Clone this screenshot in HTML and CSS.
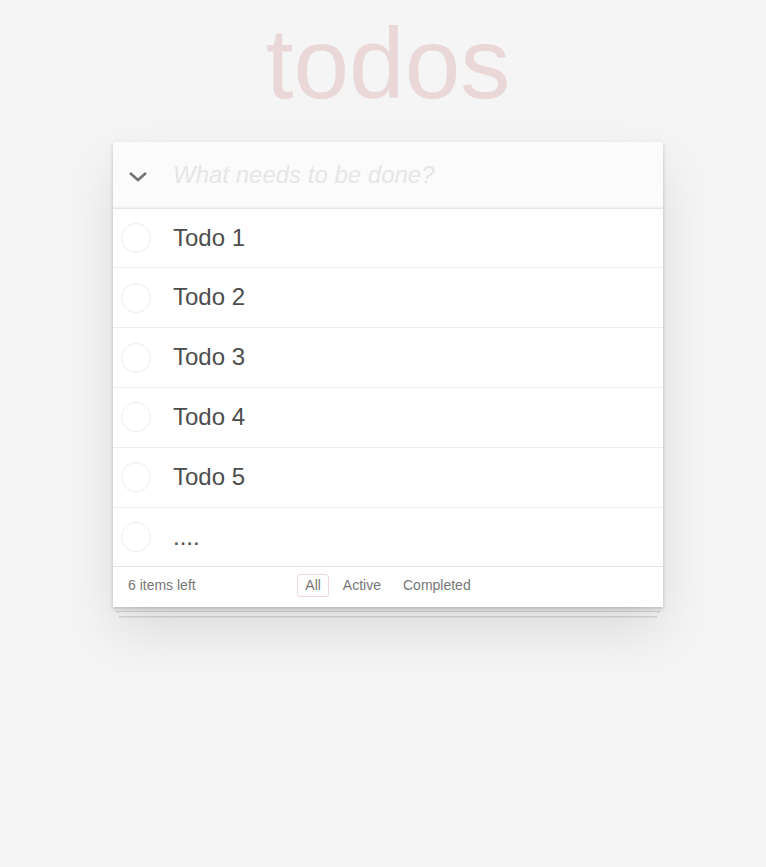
FILE: index.html
```html
<!DOCTYPE html>
<html lang="en">
<head>
    <meta charset="UTF-8">
    <meta name="viewport" content="width=device-width, initial-scale=1.0">
    <title>Todos</title>
    <link rel="stylesheet" href="styles.css">
</head>
<body>
    <div class="page">
        <h1>todos</h1>
        <section class="todoapp">
            <header class="new-row">
                <span class="toggle-all">
                    <svg width="20" height="11" viewBox="0 0 20 11"><polyline points="2,2 10,9 18,2" fill="none" stroke="#737373" stroke-width="2.6"/></svg>
                </span>
                <input class="new-todo" type="text" placeholder="What needs to be done?">
            </header>
            <ul class="todo-list">
                <li><span class="toggle"></span><label>Todo 1</label></li>
                <li><span class="toggle"></span><label>Todo 2</label></li>
                <li><span class="toggle"></span><label>Todo 3</label></li>
                <li><span class="toggle"></span><label>Todo 4</label></li>
                <li><span class="toggle"></span><label>Todo 5</label></li>
                <li><span class="toggle"></span><label>....</label></li>
            </ul>
            <footer class="footer">
                <span class="todo-count">6 items left</span>
                <ul class="filters">
                    <li><a href="#" class="selected">All</a></li>
                    <li><a href="#">Active</a></li>
                    <li><a href="#">Completed</a></li>
                </ul>
                <span></span>
            </footer>
        </section>
        <!-- stacked paper under the list -->
        <div class="sheet sheet-1"></div>
        <div class="sheet sheet-2"></div>
    </div>
</body>
</html>
```

FILE: styles.css
```css
html, body {
    min-height: 100%;
}
body {
    margin: 0;
    background: #f5f5f5;
    color: #4d4d4d;
    font: 14px "Liberation Sans", Arial, sans-serif;
    line-height: 1.4em;
}
.page {
    width: 550px;
    margin: 0 auto;
    padding: 0 0 100px 10px;
}
h1 {
    margin: 13px 0 29px;
    font-size: 100px;
    line-height: 100px;
    font-weight: 100;
    text-align: center;
    color: rgba(175, 47, 47, 0.15);
}
.todoapp {
    position: relative;
    background: #fff;
    box-shadow: 0 2px 4px 0 rgba(0, 0, 0, 0.2), 0 25px 50px 0 rgba(0, 0, 0, 0.1);
}
.new-row {
    display: flex;
    align-items: center;
    background: rgba(0, 0, 0, 0.015);
    box-shadow: inset 0 -2px 1px rgba(0, 0, 0, 0.03);
}
.toggle-all {
    display: flex;
    justify-content: center;
    width: 50px;
    margin-top: 3px;
}
.new-todo {
    flex: 1;
    margin: 0;
    padding: 16px 16px 16px 10px;
    border: none;
    outline: none;
    background: transparent;
    font: inherit;
    font-size: 24px;
    line-height: 1.4em;
    color: #4d4d4d;
}
.new-todo::placeholder {
    font-style: italic;
    color: #e6e6e6;
}
.todo-list {
    margin: 0;
    padding: 0;
    list-style: none;
    border-top: 1px solid #e6e6e6;
}
.todo-list li {
    display: flex;
    align-items: center;
    padding-left: 8px;
    font-size: 24px;
    border-bottom: 1px solid #ededed;
}
.todo-list li:last-child {
    border-bottom: none;
}
.toggle {
    width: 28px;
    height: 28px;
    border: 1px solid #ededed;
    border-radius: 50%;
}
.todo-list label {
    padding: 15px 15px 15px 22px;
    line-height: 1.2;
}
.footer {
    display: grid;
    grid-template-columns: 1fr auto 1fr;
    align-items: center;
    height: 23px;
    padding: 7px 15px 10px;
    border-top: 1px solid #e6e6e6;
    color: #777;
}
.filters {
    display: flex;
    margin: 0;
    padding: 0;
    list-style: none;
}
.filters a {
    display: block;
    margin: 0 3px;
    padding: 3px 7px;
    line-height: 15px;
    color: inherit;
    text-decoration: none;
    border: 1px solid transparent;
    border-radius: 3px;
}
.filters a.selected {
    border-color: rgba(175, 47, 47, 0.2);
}
.sheet {
    height: 4px;
    background: #f6f6f6;
    border-bottom: 1px solid #d6d6d6;
    box-shadow: 0 1px 1px rgba(0, 0, 0, 0.06);
}
.sheet-1 {
    margin: 0 3px;
}
.sheet-2 {
    margin: 0 6px;
}
```
